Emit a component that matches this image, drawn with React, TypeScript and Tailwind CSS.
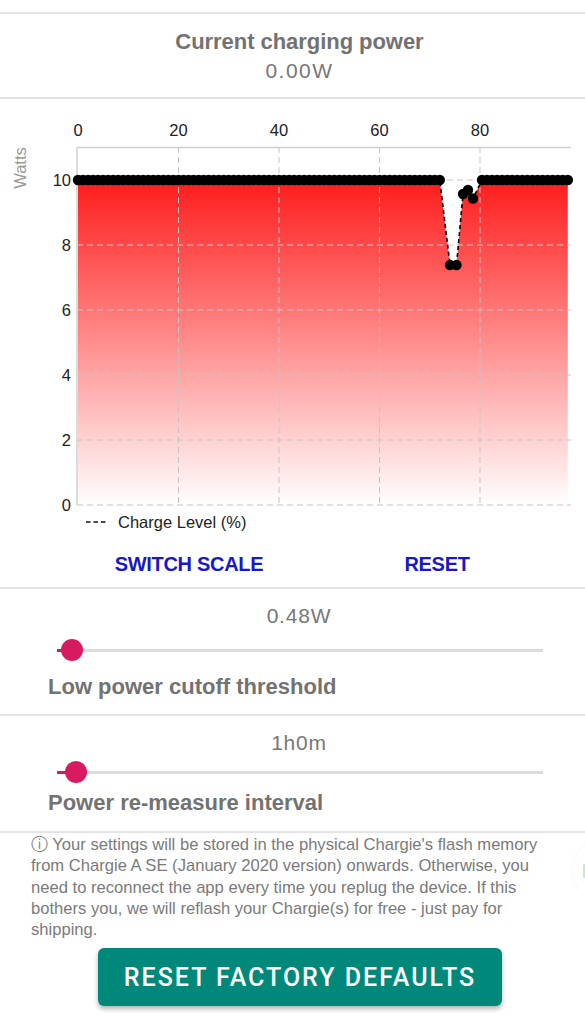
import React from "react";

const X0 = 77;
const STEP = 5.025;
const yOf = (v: number) => 505 - v * 32.5;
const FONT = "'Liberation Sans', Arial, sans-serif";

function buildPoints(): [number, number][] {
  const pts: [number, number][] = [];
  for (let i = 0; i <= 72; i++) pts.push([X0 + 1 + i * STEP, yOf(10)]);
  pts.push([450, 265]);
  pts.push([456.5, 265]);
  pts.push([463, 194]);
  pts.push([468, 190]);
  pts.push([473, 198.5]);
  for (let x = 482; x <= 570.5; x += 5.05) pts.push([x, yOf(10)]);
  return pts;
}

function Chart() {
  const pts = buildPoints();
  const line = pts.map((p, i) => `${i === 0 ? "M" : "L"}${p[0].toFixed(1)},${p[1].toFixed(1)}`).join(" ");
  const last = pts[pts.length - 1];
  const fill = `${line} L${last[0].toFixed(1)},505 L${pts[0][0]},505 Z`;
  const xTicks = [0, 20, 40, 60, 80];
  const yTicks = [0, 2, 4, 6, 8, 10];
  return (
    <svg className="block" width={585} height={441} viewBox="0 99 585 441">
      <defs>
        <linearGradient id="redfill" gradientUnits="userSpaceOnUse" x1="0" y1="180" x2="0" y2="505">
          <stop offset="0" stopColor="#ff1c1c" />
          <stop offset="1" stopColor="#ffffff" />
        </linearGradient>
      </defs>
      {xTicks.map((t) => (
        <text key={t} x={X0 + t * STEP + 1} y={136} textAnchor="middle" fontSize={16.5} fill="#222" fontFamily={FONT}>
          {t}
        </text>
      ))}
      {yTicks.map((t) => (
        <text key={t} x={71} y={yOf(t) + 6} textAnchor="end" fontSize={16.5} fill="#222" fontFamily={FONT}>
          {t}
        </text>
      ))}
      <text
        transform="translate(26,168) rotate(-90)"
        textAnchor="middle"
        fontSize={16.5}
        fill="#9a9a9a"
        fontFamily={FONT}
      >
        Watts
      </text>
      <path d={fill} fill="url(#redfill)" />
      {[1, 2, 3, 4].map((k) => {
        const x = X0 + k * 20 * STEP + 1;
        return <line key={k} x1={x} y1={147} x2={x} y2={505} stroke="#c4c4c4" strokeWidth={1} strokeDasharray="6 4" />;
      })}
      {yTicks.map((t) => (
        <line key={t} x1={X0} y1={yOf(t)} x2={571} y2={yOf(t)} stroke="#c4c4c4" strokeWidth={1} strokeDasharray="6 4" />
      ))}
      <line x1={X0} y1={147.5} x2={571} y2={147.5} stroke="#cfcfcf" strokeWidth={1.5} />
      <line x1={X0} y1={147} x2={X0} y2={505} stroke="#cfcfcf" strokeWidth={1.5} />
      <path d={line} fill="none" stroke="#000" strokeWidth={1.6} strokeDasharray="4 3" />
      {pts.map((p, i) => (
        <circle key={i} cx={p[0]} cy={p[1]} r={5.2} fill="#000" />
      ))}
      <line x1={86} y1={522} x2={107} y2={522} stroke="#111" strokeWidth={1.7} strokeDasharray="4.5 3" />
      <text x={118} y={528} fontSize={16.5} fill="#222" fontFamily={FONT}>
        Charge Level (%)
      </text>
    </svg>
  );
}

function Slider({ thumbLeft }: { thumbLeft: number }) {
  return (
    <div className="relative ml-[57px] h-[22px] w-[486px]">
      <div className="absolute left-0 right-0 top-[9.5px] h-[3px] bg-[#dcdcdc]" />
      <div className="absolute left-0 top-[9.5px] h-[3px] bg-[#d81b60]" style={{ width: thumbLeft + 11 }} />
      <div className="absolute top-0 h-[22px] w-[22px] rounded-full bg-[#d81b60]" style={{ left: thumbLeft }} />
    </div>
  );
}

export default function App() {
  return (
    <div className="relative h-[1024px] w-[585px] overflow-hidden bg-white font-['Liberation_Sans',Arial,sans-serif]">
      <div className="h-[12px]" />
      <div className="border-t-2 border-[#e4e4e4]" />
      <div className="pb-[13px] pl-[14px] pt-[15px] text-center">
        <div className="text-[22px] font-bold leading-[26px] tracking-[-0.05px] text-[#727272]">Current charging power</div>
        <div className="mt-[3px] text-[21px] leading-[26px] tracking-[1.5px] text-[#777]">0.00W</div>
      </div>
      <div className="border-t-2 border-[#e4e4e4]" />
      <Chart />
      <div className="ml-[65px] grid h-[47px] w-[496px] grid-cols-2 items-center">
        <div className="text-center text-[20px] font-bold tracking-[-0.3px] text-[#1818c8]">SWITCH SCALE</div>
        <div className="text-center text-[20px] font-bold tracking-[-0.3px] text-[#1818c8]">RESET</div>
      </div>
      <div className="border-t-2 border-[#e4e4e4]" />
      <div className="pb-[15px] pt-[15px]">
        <div className="pl-[13px] text-center text-[21px] leading-[24px] tracking-[0.8px] text-[#777]">0.48W</div>
        <div className="mt-[11px]">
          <Slider thumbLeft={4} />
        </div>
        <div className="mt-[14px] pl-[48px] text-[22px] font-bold leading-[24px] text-[#727272]">
          Low power cutoff threshold
        </div>
      </div>
      <div className="border-t-2 border-[#e4e4e4]" />
      <div className="pb-[16px] pt-[15px]">
        <div className="pl-[13px] text-center text-[21px] leading-[24px] tracking-[0.8px] text-[#777]">1h0m</div>
        <div className="mt-[6px]">
          <Slider thumbLeft={8} />
        </div>
        <div className="mt-[8px] pl-[48px] text-[22px] font-bold leading-[24px] text-[#727272]">
          Power re-measure interval
        </div>
      </div>
      <div className="border-t-2 border-[#e4e4e4]" />
      <div className="px-[31px] pt-[1px] text-[16.6px] leading-[21.3px] text-[#7a7a7a]">
        <div className="whitespace-nowrap">ⓘ Your settings will be stored in the physical Chargie's flash memory</div>
        <div className="whitespace-nowrap">from Chargie A SE (January 2020 version) onwards. Otherwise, you</div>
        <div className="whitespace-nowrap">need to reconnect the app every time you replug the device. If this</div>
        <div className="whitespace-nowrap">bothers you, we will reflash your Chargie(s) for free - just pay for</div>
        <div className="whitespace-nowrap">shipping.</div>
      </div>
      <div className="mt-[8px] flex justify-center">
        <button className="ml-[15px] flex h-[58px] w-[404px] items-center justify-center rounded-[6px] bg-[#00897b] font-['Roboto',sans-serif] text-[25px] font-medium tracking-[2px] text-white shadow-[0_3px_5px_rgba(0,0,0,0.3)]">
          RESET FACTORY DEFAULTS
        </button>
      </div>
      <div className="absolute left-[574px] top-[838px] h-[64px] w-[64px] rounded-full bg-white shadow-[0_0_8px_rgba(0,0,0,0.04)]">
        <div className="ml-[9px] mt-[26px] h-[14px] w-[3px] rounded-full bg-[#8fd0a8] opacity-50" />
      </div>
    </div>
  );
}
